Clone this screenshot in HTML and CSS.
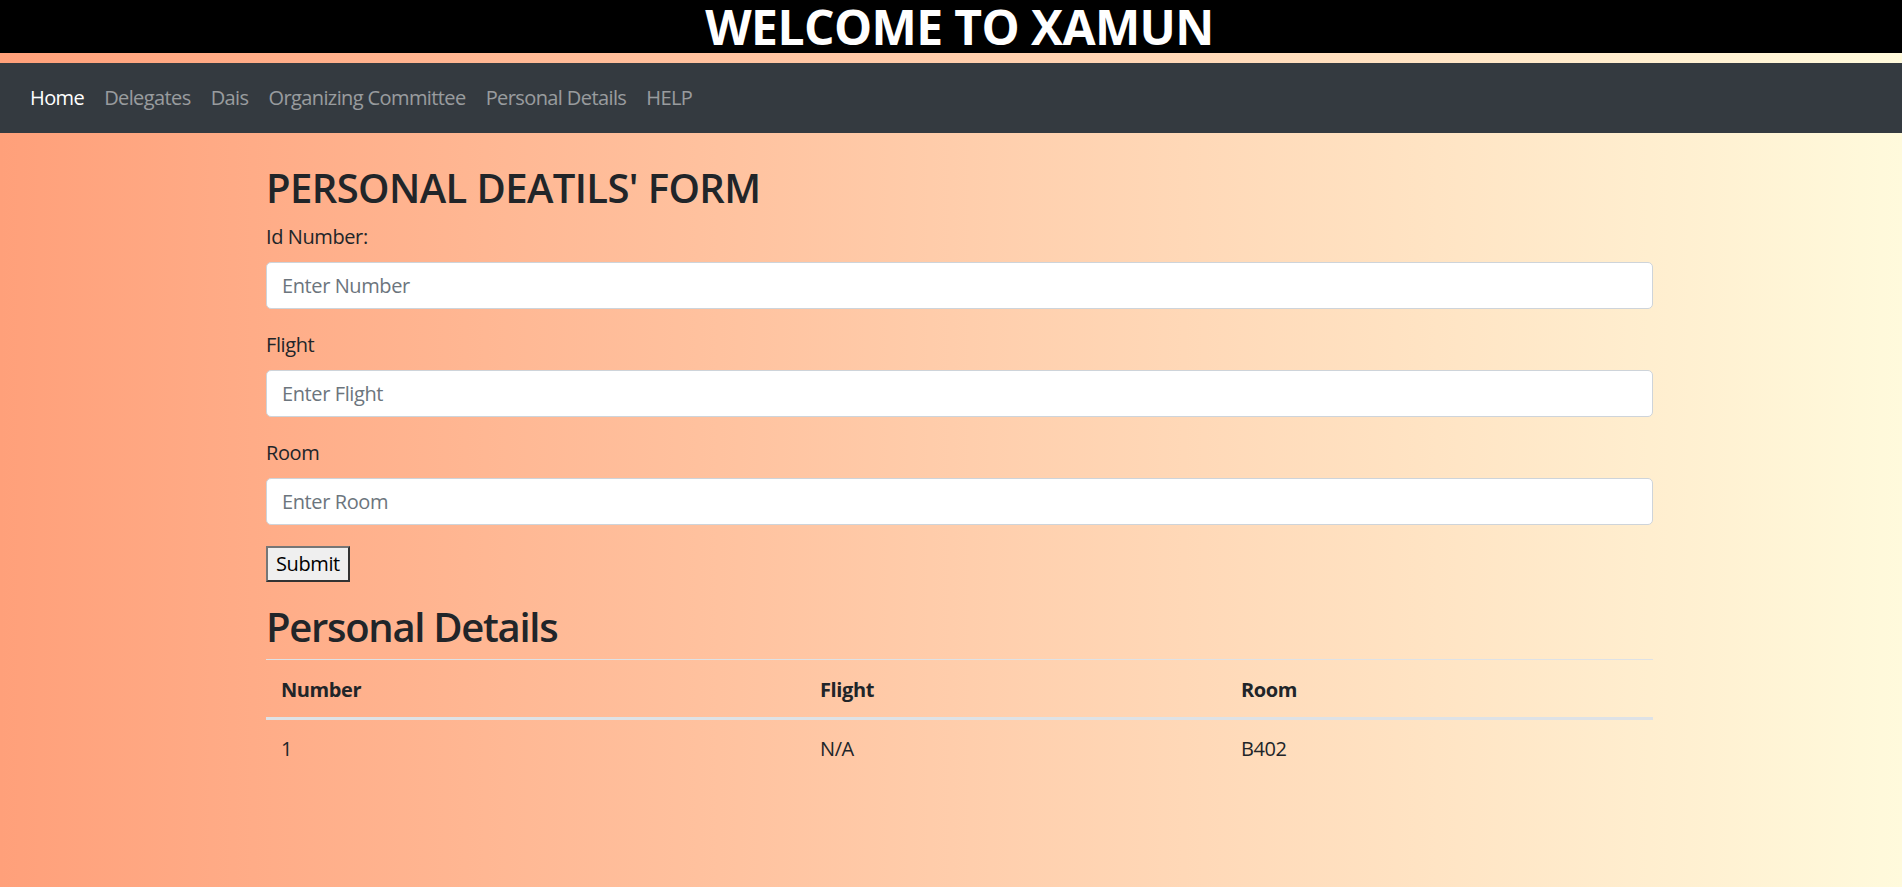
FILE: index.html
```html
<!DOCTYPE html>
<html lang="en">
<head>
<meta charset="utf-8">
<title>XAMUN - Personal Details</title>
<link rel="stylesheet" href="styles.css">
</head>
<body>
<header class="banner">
  <h1 class="banner-title">WELCOME TO XAMUN</h1>
</header>
<nav class="navbar">
  <ul class="nav">
    <li><a class="nav-link active" href="#">Home</a></li>
    <li><a class="nav-link" href="#">Delegates</a></li>
    <li><a class="nav-link" href="#">Dais</a></li>
    <li><a class="nav-link" href="#">Organizing Committee</a></li>
    <li><a class="nav-link" href="#">Personal Details</a></li>
    <li><a class="nav-link" href="#">HELP</a></li>
  </ul>
</nav>
<main class="container">
  <h2 class="heading form-heading">PERSONAL DEATILS' FORM</h2>
  <form class="form">
    <div class="form-group">
      <label class="label" for="idnum">Id Number:</label>
      <input class="input" id="idnum" type="text" placeholder="Enter Number">
    </div>
    <div class="form-group">
      <label class="label" for="flight">Flight</label>
      <input class="input" id="flight" type="text" placeholder="Enter Flight">
    </div>
    <div class="form-group">
      <label class="label" for="room">Room</label>
      <input class="input" id="room" type="text" placeholder="Enter Room">
    </div>
    <button class="submit" type="submit">Submit</button>
  </form>
  <h2 class="heading table-heading">Personal Details</h2>
  <table class="table">
    <thead>
      <tr>
        <th class="col-number">Number</th>
        <th class="col-flight">Flight</th>
        <th class="col-room">Room</th>
      </tr>
    </thead>
    <tbody>
      <tr>
        <td>1</td>
        <td>N/A</td>
        <td>B402</td>
      </tr>
    </tbody>
  </table>
</main>
</body>
</html>
```
FILE: styles.css
```css
* { box-sizing: border-box; }

html, body {
  margin: 0;
  padding: 0;
}

body {
  min-height: 100vh;
  font-family: "Open Sans", "Noto Sans", sans-serif;
  font-size: 20px;
  line-height: 30px;
  letter-spacing: -0.4px;
  color: #212529;
  background: linear-gradient(to right, #ffa07a 0%, #fffadc 100%);
}

.banner {
  background: #000;
  height: 53px;
  margin-bottom: 10px;
  padding-left: 17px;
  text-align: center;
}

.banner-title {
  margin: 0;
  color: #fff;
  font-size: 48px;
  font-weight: 700;
  line-height: 53px;
  letter-spacing: -0.6px;
}

.navbar {
  background: #343a40;
  height: 70px;
  padding: 0 20px;
  display: flex;
  align-items: center;
}

.nav {
  list-style: none;
  margin: 0;
  padding: 0;
  display: flex;
}

.nav-link {
  display: block;
  padding: 0 10px;
  color: rgba(255, 255, 255, 0.5);
  text-decoration: none;
  font-size: 20px;
  line-height: 30px;
  letter-spacing: -0.6px;
}

.nav-link.active {
  color: #fff;
}

.container {
  width: 1387px;
  margin-left: 266px;
  padding-top: 31px;
}

.heading {
  margin: 0 0 10px;
  font-size: 40px;
  font-weight: 600;
  line-height: 48px;
  letter-spacing: -0.6px;
}

.form-group {
  margin-bottom: 21px;
}

.label {
  display: block;
  margin-bottom: 10px;
}

.input {
  display: block;
  width: 100%;
  height: 47px;
  padding: 0 15px;
  font-family: inherit;
  font-size: 20px;
  letter-spacing: -0.4px;
  color: #495057;
  background: #fff;
  border: 1px solid #ced4da;
  border-radius: 5px;
}

.input::placeholder {
  color: #6c757d;
  opacity: 1;
}

.submit {
  display: block;
  height: 36px;
  padding: 0 8px;
  font-family: inherit;
  font-size: 20px;
  line-height: 30px;
  letter-spacing: -0.4px;
  color: #000;
  background: #efefef;
  border: 2px solid #333;
  border-top-color: #767676;
  border-left-color: #767676;
}

.table-heading {
  margin-top: 21px;
  margin-bottom: 8px;
  letter-spacing: -1.3px;
}

.table {
  width: 100%;
  border-collapse: collapse;
}

.table th,
.table td {
  padding: 15px;
  text-align: left;
  vertical-align: top;
  border-top: 1px solid #dee2e6;
}

.table th {
  font-weight: 700;
  vertical-align: bottom;
  padding-bottom: 12px;
  border-bottom: 3px solid #dee2e6;
}

.table td {
  padding-top: 14px;
}

.col-number { width: 539px; }
.col-flight { width: 421px; }
.col-room { width: 427px; }
```
